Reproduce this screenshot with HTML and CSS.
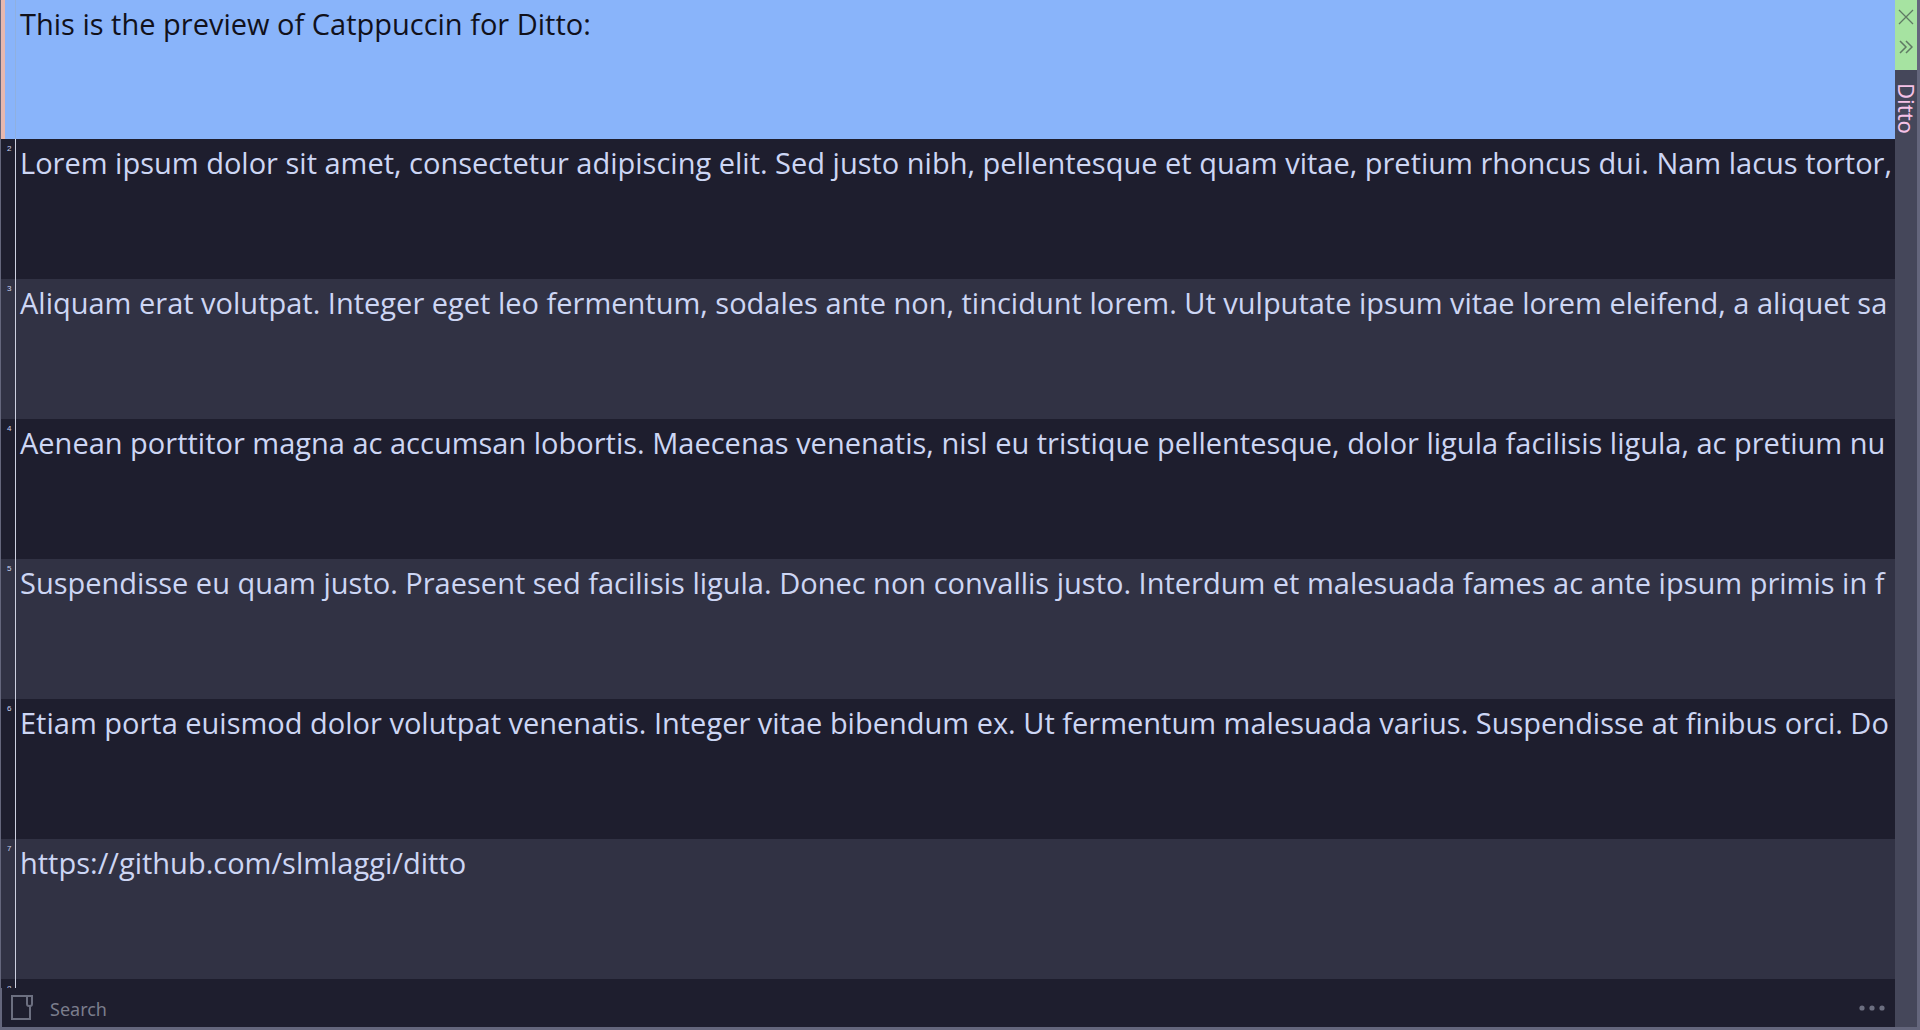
FILE: index.html
```html
<!DOCTYPE html>
<html lang="en">
<head>
<meta charset="utf-8">
<title>Ditto</title>
<link rel="stylesheet" href="styles.css">
</head>
<body>
<div class="window">
  <main class="main">
    <ol class="clips">
      <li class="clip selected"><span class="num"></span><span class="text">This is the preview of Catppuccin for Ditto:</span></li>
      <li class="clip"><span class="num">2</span><span class="text">Lorem ipsum dolor sit amet, consectetur adipiscing elit. Sed justo nibh, pellentesque et quam vitae, pretium rhoncus dui. Nam lacus tortor,</span></li>
      <li class="clip"><span class="num">3</span><span class="text">Aliquam erat volutpat. Integer eget leo fermentum, sodales ante non, tincidunt lorem. Ut vulputate ipsum vitae lorem eleifend, a aliquet sa</span></li>
      <li class="clip"><span class="num">4</span><span class="text">Aenean porttitor magna ac accumsan lobortis. Maecenas venenatis, nisl eu tristique pellentesque, dolor ligula facilisis ligula, ac pretium nu</span></li>
      <li class="clip"><span class="num">5</span><span class="text">Suspendisse eu quam justo. Praesent sed facilisis ligula. Donec non convallis justo. Interdum et malesuada fames ac ante ipsum primis in f</span></li>
      <li class="clip"><span class="num">6</span><span class="text">Etiam porta euismod dolor volutpat venenatis. Integer vitae bibendum ex. Ut fermentum malesuada varius. Suspendisse at finibus orci. Do</span></li>
      <li class="clip"><span class="num">7</span><span class="text">https://github.com/slmlaggi/ditto</span></li>
      <li class="clip"><span class="num">8</span><span class="text"></span></li>
    </ol>
    <form class="search">
      <button class="icon-button" type="button" aria-label="Groups">
        <svg width="22" height="26" viewBox="0 0 22 26" fill="none" stroke="currentColor" stroke-width="2"><path d="M16 1H1v23h18V11"/><path d="M16 1h5v8q0 2-2 2h-1q-2 0-2-2z"/></svg>
      </button>
      <input class="field" type="text" placeholder="Search" aria-label="Search">
      <button class="icon-button" type="button" aria-label="More options">
        <svg width="26" height="6" viewBox="0 0 26 6" fill="currentColor"><circle cx="3" cy="3" r="2.6"/><circle cx="13" cy="3" r="2.6"/><circle cx="23" cy="3" r="2.6"/></svg>
      </button>
    </form>
  </main>
  <aside class="caption">
    <div class="controls">
      <button class="control" type="button" aria-label="Close">
        <svg width="16" height="16" viewBox="0 0 16 16" fill="none" stroke="currentColor" stroke-width="1.3"><path d="M1 1l14 14M15 1L1 15"/></svg>
      </button>
      <button class="control" type="button" aria-label="Collapse">
        <svg width="14" height="14" viewBox="0 0 14 14" fill="none" stroke="currentColor" stroke-width="1.5"><path d="M1 1l6 6-6 6M7 1l6 6-6 6"/></svg>
      </button>
    </div>
    <h1 class="title">Ditto</h1>
  </aside>
</div>
</body>
</html>
```
FILE: styles.css
```css
* { box-sizing: border-box; }
body { margin: 0; background: #1e1e2e; }
.window {
  display: flex;
  height: 100vh;
  border-right: 3px solid #64667c;
  border-bottom: 3px solid #64667c;
  overflow: hidden;
}
.main { flex: 1; min-width: 0; display: flex; flex-direction: column; }
.clips {
  flex: 1;
  min-height: 0;
  margin: 0;
  padding: 0;
  list-style: none;
  overflow: hidden;
  border-left: 1px solid #64667c;
}
.clip {
  display: flex;
  height: 140px;
  background: #1e1e2e;
  color: #cdd6f4;
}
.clip:nth-child(odd) { background: #313244; }
.clip.selected {
  height: 139px;
  background: #89b4fa;
  color: #11111b;
  border-left: 4px solid #e6b8af;
}
.num {
  flex: none;
  width: 15px;
  padding: 4px 0 0 6px;
  border-right: 1px solid #cdd0e0;
  font: 8px/12px "Liberation Sans", Arial, sans-serif;
}
.selected .num { width: 11px; border-color: #8fb0e0; }
.text {
  flex: 1;
  min-width: 0;
  overflow: hidden;
  padding: 6px 0 0 4px;
  font: 29px/36px "Open Sans", "Noto Sans", sans-serif;
  white-space: nowrap;
}
.search {
  display: flex;
  align-items: center;
  height: 39px;
  margin: 0;
  padding: 0 10px 0 9px;
  border-left: 2px solid #64667c;
  background: #1e1e2e;
  color: #6c6f80;
}
.icon-button {
  display: flex;
  padding: 0;
  border: 0;
  background: none;
  color: inherit;
}
.field {
  flex: 1;
  min-width: 0;
  height: 32px;
  margin: 0 17px;
  padding: 2px 0 0;
  border: 0;
  outline: 0;
  background: none;
  color: #cdd6f4;
  font: 18px/24px "Noto Sans", sans-serif;
}
.field::placeholder { color: #7b7d8c; opacity: 1; }
.caption { width: 22px; background: #45475a; }
.controls {
  display: flex;
  flex-direction: column;
  align-items: center;
  gap: 15px;
  height: 70px;
  padding-top: 9px;
  background: #a6e3a1;
}
.control {
  display: flex;
  padding: 0;
  border: 0;
  background: none;
  color: #5f7a63;
}
.title {
  margin: 13px 0 0;
  writing-mode: vertical-rl;
  color: #f5c2e7;
  font: 22px/24px "Noto Sans", sans-serif;
}
```
